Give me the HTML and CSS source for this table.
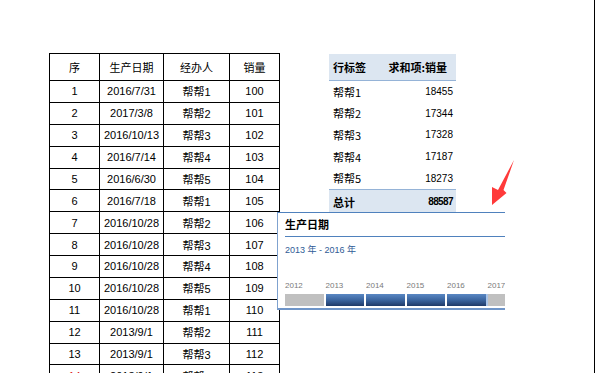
FILE: index.html
```html
<!DOCTYPE html>
<html lang="zh-CN">
<head>
<meta charset="utf-8">
<title>数据透视表</title>
<link rel="stylesheet" href="styles.css">
</head>
<body>
<div class="page">
  <table class="data">
    <colgroup>
      <col class="c1"><col class="c2"><col class="c3"><col class="c4">
    </colgroup>
    <thead>
      <tr class="head"><th>序</th><th>生产日期</th><th>经办人</th><th>销量</th></tr>
    </thead>
    <tbody>
      <tr><td>1</td><td>2016/7/31</td><td>帮帮1</td><td>100</td></tr>
      <tr><td>2</td><td>2017/3/8</td><td>帮帮2</td><td>101</td></tr>
      <tr><td>3</td><td>2016/10/13</td><td>帮帮3</td><td>102</td></tr>
      <tr><td>4</td><td>2016/7/14</td><td>帮帮4</td><td>103</td></tr>
      <tr><td>5</td><td>2016/6/30</td><td>帮帮5</td><td>104</td></tr>
      <tr><td>6</td><td>2016/7/18</td><td>帮帮1</td><td>105</td></tr>
      <tr><td>7</td><td>2016/10/28</td><td>帮帮2</td><td>106</td></tr>
      <tr><td>8</td><td>2016/10/28</td><td>帮帮3</td><td>107</td></tr>
      <tr><td>9</td><td>2016/10/28</td><td>帮帮4</td><td>108</td></tr>
      <tr><td>10</td><td>2016/10/28</td><td>帮帮5</td><td>109</td></tr>
      <tr><td>11</td><td>2016/10/28</td><td>帮帮1</td><td>110</td></tr>
      <tr><td>12</td><td>2013/9/1</td><td>帮帮2</td><td>111</td></tr>
      <tr><td>13</td><td>2013/9/1</td><td>帮帮3</td><td>112</td></tr>
      <tr><td class="red">14</td><td>2013/9/1</td><td>帮帮4</td><td>113</td></tr>
    </tbody>
  </table>

  <div class="pivot">
    <div class="prow phead"><span class="plabel">行标签</span><span class="pval">求和项:销量</span></div>
    <div class="prow"><span class="plabel">帮帮1</span><span class="pnum">18455</span></div>
    <div class="prow"><span class="plabel">帮帮2</span><span class="pnum">17344</span></div>
    <div class="prow"><span class="plabel">帮帮3</span><span class="pnum">17328</span></div>
    <div class="prow"><span class="plabel">帮帮4</span><span class="pnum">17187</span></div>
    <div class="prow"><span class="plabel">帮帮5</span><span class="pnum">18273</span></div>
    <div class="prow ptotal"><span class="plabel">总计</span><span class="pnum">88587</span></div>
  </div>

  <div class="slicer">
    <div class="s-title">生产日期</div>
    <div class="s-range">2013 年 - 2016 年</div>
    <div class="s-years">
      <span>2012</span><span>2013</span><span>2014</span><span>2015</span><span>2016</span><span>2017</span>
    </div>
    <div class="s-bars">
      <span class="bar off"></span>
      <span class="bar on"></span>
      <span class="bar on"></span>
      <span class="bar on"></span>
      <span class="bar on last"></span>
      <span class="bar off"></span>
    </div>
  </div>

  <svg class="arrow" width="30" height="50" viewBox="0 0 30 50">
    <polygon points="24,0 13.5,30 16.5,33 2,45 2,27 8,30" fill="#ff3a3a"/>
  </svg>
</div>
</body>
</html>
```

FILE: styles.css
```css
html, body {
  margin: 0;
  padding: 0;
  background: #fff;
}

.page {
  position: relative;
  width: 595px;
  height: 373px;
  box-sizing: border-box;
  border-right: 1px solid #000;
  overflow: hidden;
  display: flex;
  align-items: flex-start;
  padding: 53px 0 0 49px;
  font-family: "Liberation Sans", "Noto Sans CJK SC", sans-serif;
  color: #000;
}

.data {
  border-collapse: collapse;
  table-layout: fixed;
  width: 230px;
  flex: none;
  font-size: 11px;
}
.c1 { width: 50px; }
.c2 { width: 64px; }
.c3 { width: 66px; }
.c4 { width: 50px; }

.data th, .data td {
  border: 1px solid #000;
  padding: 0;
  text-align: center;
  font-weight: normal;
  white-space: nowrap;
}
.data tr { height: 21.875px; }
.data tr.head { height: 27px; }
.data td.red { color: #e02020; }

.pivot {
  margin-left: 49px;
  margin-top: 1px;
  width: 127px;
  flex: none;
  font-size: 10px;
}
.prow {
  display: flex;
  align-items: center;
  justify-content: space-between;
  height: 21.6px;
  padding: 0 3px 0 4px;
}
.plabel, .pval {
  font-family: "Noto Sans CJK SC", sans-serif;
  font-size: 11px;
}
.phead {
  height: 26px;
  background: #dce6f1;
  border-bottom: 1px solid #95b3d7;
  font-weight: bold;
  padding-right: 9px;
}
.ptotal {
  height: 22px;
  background: #dce6f1;
  border-top: 1px solid #95b3d7;
  font-weight: bold;
  padding-top: 1px;
}
.ptotal .pnum { letter-spacing: -0.6px; }

.slicer {
  position: absolute;
  left: 277px;
  top: 212px;
  width: 228px;
  height: 98px;
  box-sizing: border-box;
  background: #fff;
  border-top: 1px solid #4f81bd;
  border-left: 1px solid #7fa2cf;
  border-bottom: 2px solid #6f95c8;
  padding-left: 7px;
  display: flex;
  flex-direction: column;
  overflow: hidden;
}
.s-title {
  height: 23px;
  border-bottom: 1px solid #4f81bd;
  font-family: "Noto Sans CJK SC", sans-serif;
  font-weight: bold;
  font-size: 11px;
  line-height: 23px;
  flex: none;
}
.s-range {
  height: 26px;
  line-height: 26px;
  font-size: 9px;
  color: #2f5b96;
  font-family: "Liberation Sans", "Noto Sans CJK SC", sans-serif;
  flex: none;
}
.s-years {
  margin-top: 18px;
  height: 10px;
  display: flex;
  gap: 2px;
  font-size: 8px;
  line-height: 10px;
  color: #7a7a7a;
  flex: none;
}
.s-years span {
  width: 38.5px;
  flex: none;
}
.s-bars {
  margin-top: 3px;
  height: 12px;
  display: flex;
  gap: 2px;
  flex: none;
}
.bar {
  width: 38.5px;
  height: 12px;
  flex: none;
  box-sizing: border-box;
}
.bar.off { background: #c0c0c0; }
.bar.on { background: linear-gradient(#5a88c4, #3b659f 50%, #1f3a68); }
.bar.last { border-right: 2px solid #a9c4e8; width: 40.5px; margin-right: -2px; }

.arrow {
  position: absolute;
  left: 490px;
  top: 160px;
}
```
